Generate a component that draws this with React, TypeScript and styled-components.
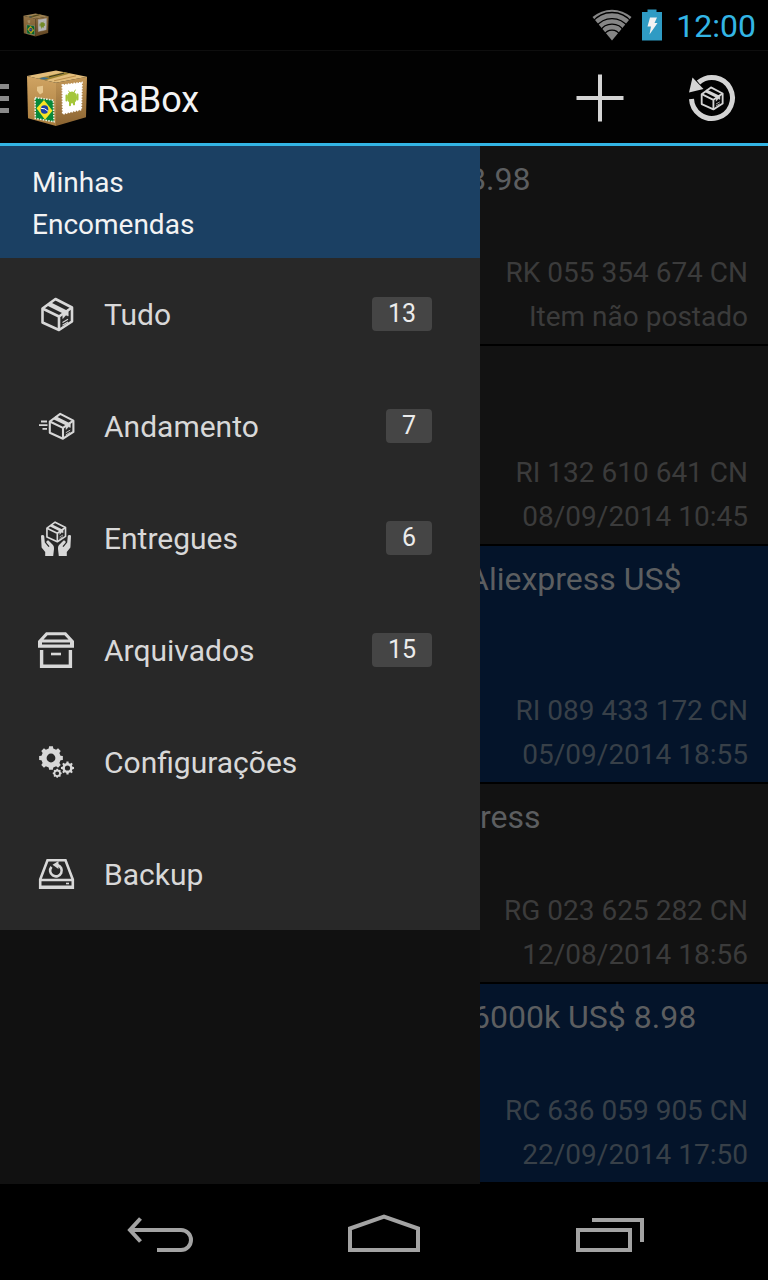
import React from "react";
import styled, { createGlobalStyle } from "styled-components";

const GlobalStyle = createGlobalStyle`
  * { box-sizing: border-box; }
  body { margin: 0; background: #000; font-family: Roboto, "Liberation Sans", sans-serif; }
  button { border: 0; padding: 0; background: none; color: inherit; font: inherit; cursor: pointer; }
  svg { display: block; flex: none; }
  h1, h2, p, ul { margin: 0; padding: 0; font-weight: 400; }
  ul { list-style: none; }
`;

const Screen = styled.div`
  display: flex;
  flex-direction: column;
  min-height: 100vh;
  background: #000;
`;

const StatusBar = styled.div`
  display: flex;
  align-items: center;
  height: 51px;
  padding: 0 12px 0 23px;
  border-bottom: 1px solid #0e0e0e;
`;

const Notification = styled.div`
  opacity: 0.7;
`;

const StatusIcons = styled.div`
  display: flex;
  align-items: center;
  gap: 10px;
  margin-left: auto;
`;

const Clock = styled.time`
  margin-left: 4px;
  padding-top: 2px;
  font-size: 32px;
  line-height: 40px;
  color: #33b5e5;
`;

const ActionBar = styled.header`
  display: flex;
  align-items: center;
  height: 95px;
  padding: 2px 32px 0 0;
  border-bottom: 3px solid #33b5e5;
  background: #020202;
`;

const HomeButton = styled.button`
  display: flex;
  align-items: center;
  gap: 16px;
`;

const AppTitle = styled.h1`
  margin-left: 9px;
  padding-top: 4px;
  font-size: 36px;
  line-height: 44px;
  color: #f3f3f3;
`;

const Actions = styled.div`
  display: flex;
  gap: 64px;
  margin-left: auto;
  color: #d4d4d4;
`;

const Body = styled.main`
  display: flex;
  flex: 1;
`;

const Drawer = styled.aside`
  flex: 0 0 62.5%;
  background: #111;
`;

const DrawerHeader = styled.h2`
  padding: 16px 32px 12px;
  background: #1b4063;
  font-size: 28px;
  line-height: 42px;
  color: #f3f3f3;
`;

const DrawerHeaderLine = styled.span`
  display: block;
`;

const MenuList = styled.ul`
  background: #282828;
`;

const MenuButton = styled.button`
  display: flex;
  align-items: center;
  width: 100%;
  height: 112px;
  padding: 0 48px 0 38px;
  gap: 30px;
  font-size: 30px;
  color: #d8d8d8;
`;

const Badge = styled.span`
  margin-left: auto;
  padding: 0 16px;
  border-radius: 4px;
  background: #454545;
  font-size: 25px;
  line-height: 34px;
  color: #ececec;
`;

const OrderList = styled.ul`
  flex: 1;
  min-width: 0;
  overflow: hidden;
`;

const Order = styled.li<{ $highlight?: boolean }>`
  display: flex;
  flex-direction: column;
  padding: 14px 20px 5px 0;
  border-bottom: 2px solid #000;
  background: ${(p) => (p.$highlight ? "#04142a" : "#121212")};
  color: ${(p) => (p.$highlight ? "#384048" : "#3b3b3b")};
`;

const OrderTitle = styled.h2<{ $lines: number; $shift: number }>`
  height: ${(p) => p.$lines * 38}px;
  margin-bottom: 53px;
  text-indent: ${(p) => -p.$shift}px;
  font-size: 32px;
  line-height: 38px;
  white-space: nowrap;
  color: #5c5e60;
`;

const OrderLine = styled.p`
  font-size: 28px;
  line-height: 44px;
  text-align: right;
  white-space: nowrap;
`;

const SystemNav = styled.nav`
  display: flex;
  height: 96px;
  padding: 0 48px;
  color: #a3a3a3;
`;

const SystemButton = styled.button`
  display: flex;
  flex: 1;
  align-items: center;
  justify-content: center;
`;

function BoxLogo({ width, height }: { width: number; height: number }) {
  return (
    <svg width={width} height={height} viewBox="0 0 62 59" preserveAspectRatio="none" aria-hidden="true">
      <defs>
        <linearGradient id="boxLeft" x1="0" y1="0" x2="0" y2="1">
          <stop offset="0" stopColor="#d0a463" />
          <stop offset="1" stopColor="#a87b3d" />
        </linearGradient>
        <linearGradient id="boxRight" x1="0" y1="0" x2="0" y2="1">
          <stop offset="0" stopColor="#c39757" />
          <stop offset="1" stopColor="#8a6331" />
        </linearGradient>
      </defs>
      <path d="M1 7 30 14V58L2 50Z" fill="url(#boxLeft)" />
      <path d="M30 14 61 8 60 49 30 58Z" fill="url(#boxRight)" />
      <path d="M1 7 30 1.500 61 8 30 14Z" fill="#e2bd7b" />
      <path d="M12 9.500 38 3.200 44 4.500 20 11.500Z" fill="#9a8130" />
      <path d="M13 9.500 18 8.300 23 9.300 18 11Z" fill="#3e6f8c" />
      <path d="M23 8 38 4.200" stroke="#3c3a20" strokeWidth="1" />
      <path d="M28 12 50 7" stroke="#b98c48" strokeWidth="1" />
      <path d="M11 18 17 17V24L14 26 11 22Z" fill="#e6c68d" />
      <path d="M36.300 16.300 56 13.700 55.300 41.300 36.700 45.700Z" fill="#fff" stroke="#fff" strokeWidth="1.600" strokeDasharray="1.600 1.200" />
      <ellipse cx="46" cy="29" rx="5" ry="6" fill="#a4c639" />
      <path d="M40.500 27V32M51.500 26V31M44 33V37M48 32V36" stroke="#a4c639" strokeWidth="2" strokeLinecap="round" />
      <path d="M42.500 22 44 25M49.500 21 48 24" stroke="#a4c639" strokeWidth="1" />
      <path d="M9 29 27.300 31.700 28 53.700 9.300 50.300Z" fill="#07883a" stroke="#e9efe0" strokeWidth="1.600" strokeDasharray="1.600 1.200" />
      <path d="M18 31.500 26.500 42.500 19 51.500 10.500 40Z" fill="#f8e425" />
      <ellipse cx="18.500" cy="41.300" rx="3.800" ry="4.300" fill="#1c3fa5" />
      <path d="M15 40Q19 39.500 22 43" stroke="#fff" strokeWidth="1" fill="none" />
    </svg>
  );
}

/* Isometric parcel on a 36 unit grid, shared by several icons. */
function Parcel({ transform }: { transform?: string }) {
  return (
    <g transform={transform} fill="none" stroke="currentColor" strokeWidth="2.600" strokeLinejoin="round">
      <path d="M4.500 12.500 17.500 3 34 11.500V25.500L21 34 4.500 26.500Z" />
      <path d="M4.500 12.500 21 20.500 34 11.500M21 20.500V34" />
      <path d="M10.500 7.800 28 16.500" strokeWidth="4.600" />
      <path d="M24.800 17 30.200 13.500V20L28 19 24.800 22.500Z" fill="currentColor" strokeWidth="0.600" />
      <path d="M24.500 26.500 30 23.300M24.500 29.200 30 26" strokeWidth="1.100" />
    </g>
  );
}

function Icon({ children }: { children: React.ReactNode }) {
  return (
    <svg width="36" height="36" viewBox="0 0 36 36" overflow="visible" aria-hidden="true">
      {children}
    </svg>
  );
}

const hand =
  "M3 16Q3 15 4.500 15T6.200 16L6.800 22.500 10.500 27 11.500 26.300 8.300 22.500Q8.200 20 10.500 20.600L15 25Q16.300 26.500 16 29L15.200 36H7.200V32L3.600 27.500Z";

function gearPath(cx: number, cy: number, outer: number, root: number, hole: number) {
  const teeth = 8;
  const step = (Math.PI * 2) / teeth;
  const points: string[] = [];
  for (let i = 0; i < teeth; i++) {
    const a = i * step;
    [
      [root, -0.3],
      [outer, -0.2],
      [outer, 0.2],
      [root, 0.3],
    ].forEach(([r, f]) => {
      const t = a + f * step;
      points.push(`${(cx + r * Math.cos(t)).toFixed(2)} ${(cy + r * Math.sin(t)).toFixed(2)}`);
    });
  }
  return `M${points.join("L")}ZM${cx - hole} ${cy}a${hole} ${hole} 0 1 0 ${hole * 2} 0a${hole} ${hole} 0 1 0 ${-hole * 2} 0Z`;
}

const menu = [
  { label: "Tudo", count: 13, icon: <Parcel /> },
  {
    label: "Andamento",
    count: 7,
    icon: (
      <>
        <Parcel transform="translate(8.200 3.500) scale(0.800)" />
        <path d="M3 13.500H9M1 17.200H9.500M4.500 20.900H9" stroke="currentColor" strokeWidth="1.800" />
      </>
    ),
  },
  {
    label: "Entregues",
    count: 6,
    icon: (
      <>
        <Parcel transform="translate(6.100 0.300) scale(0.630)" />
        <path d={hand} fill="currentColor" />
        <path d={hand} fill="currentColor" transform="translate(36 0) scale(-1 1)" />
      </>
    ),
  },
  {
    label: "Arquivados",
    count: 15,
    icon: (
      <>
        <path
          d="M0 15.700V9L8 0.300H28L36 9V15.700ZM5.500 7.500H30.500L26.500 3.300H9.500ZM4 10.500V12.500H32V10.500Z"
          fill="currentColor"
          fillRule="evenodd"
        />
        <path d="M3.600 18V34.300H32.400V18" fill="none" stroke="currentColor" strokeWidth="3.400" />
        <path d="M13 22H23" stroke="currentColor" strokeWidth="2.600" />
      </>
    ),
  },
  {
    label: "Configurações",
    icon: (
      <g fill="currentColor" fillRule="evenodd">
        <path d={gearPath(13, 14, 12, 9.8, 4.4)} />
        <path d={gearPath(29.5, 24, 6.6, 5.1, 2.6)} />
        <path d={gearPath(19.2, 29.3, 4.5, 3.8, 1.9)} />
      </g>
    ),
  },
  {
    label: "Backup",
    icon: (
      <g fill="none" stroke="currentColor" strokeWidth="2.600">
        <path d="M2.200 23.500 9.500 4.200H27.500L34.800 23.500V31.800H2.200Z" />
        <path d="M2.200 24H34.800" />
        <path d="M2.200 31.300H34.800" strokeWidth="3.400" />
        <path d="M13.500 10.800A5.800 5.800 0 1 0 19.500 9" strokeWidth="2.600" />
        <path d="M20.500 5V13L14.500 8.800Z" fill="currentColor" stroke="none" />
        <path d="M28 27.500H31" strokeWidth="1.600" />
      </g>
    ),
  },
];

const orders = [
  { title: "8.98", shift: 12, lines: 1, code: "RK 055 354 674 CN", status: "Item não postado" },
  { title: "", shift: 0, lines: 1, code: "RI 132 610 641 CN", status: "08/09/2014 10:45" },
  { title: "Aliexpress US$", shift: 12, lines: 2, code: "RI 089 433 172 CN", status: "05/09/2014 18:55", highlight: true },
  { title: "ress", shift: 0, lines: 1, code: "RG 023 625 282 CN", status: "12/08/2014 18:56" },
  { title: "6000k US$ 8.98", shift: 8, lines: 1, code: "RC 636 059 905 CN", status: "22/09/2014 17:50", highlight: true },
];

export default function App() {
  return (
    <Screen>
      <GlobalStyle />
      <StatusBar>
        <Notification>
          <BoxLogo width={26} height={24} />
        </Notification>
        <StatusIcons>
          <svg width="40" height="32" viewBox="0 0 40 32" aria-hidden="true">
            <path d="M20 31.500 0.500 8A30 30 0 0 1 39.500 8Z" fill="#868686" />
            <g fill="none" stroke="#000" strokeWidth="1.300">
              <path d="M0 13.500A25 25 0 0 1 40 13.500" />
              <path d="M4 18A19.500 19.500 0 0 1 36 18" />
              <path d="M8 22A14 14 0 0 1 32 22" />
              <path d="M12 26A9 9 0 0 1 28 26" />
            </g>
          </svg>
          <svg width="20" height="32" viewBox="0 0 20 32" aria-hidden="true">
            <path d="M5.500 0.500H14.500V3H20V31.500H0V3H5.500Z" fill="#2f9bc4" />
            <path d="M8 8.500H15L12.500 14H15.500L7.500 25.500 9 17.500H5.500Z" fill="#f2f2f2" />
          </svg>
          <Clock>12:00</Clock>
        </StatusIcons>
      </StatusBar>

      <ActionBar>
        <HomeButton aria-label="Menu">
          <svg width="10" height="30" viewBox="0 0 10 30" aria-hidden="true">
            <path d="M0 3.500H9M0 15.500H9M0 27.500H9" stroke="#8a8a8a" strokeWidth="5" />
          </svg>
          <BoxLogo width={62} height={58} />
        </HomeButton>
        <AppTitle>RaBox</AppTitle>
        <Actions>
          <button aria-label="Adicionar">
            <svg width="48" height="48" viewBox="0 0 48 48" aria-hidden="true">
              <path d="M0.500 24H47.500M24 0.500V47.500" stroke="currentColor" strokeWidth="4" />
            </svg>
          </button>
          <button aria-label="Atualizar">
            <svg width="48" height="48" viewBox="0 0 48 48" aria-hidden="true">
              <path d="M3.500 25A20.500 20.500 0 1 0 10.500 8.500" fill="none" stroke="currentColor" strokeWidth="5" />
              <path d="M4.500 3.500 15.500 15 1 18.500Z" fill="currentColor" />
              <Parcel transform="translate(10.500 11.300) scale(0.710)" />
            </svg>
          </button>
        </Actions>
      </ActionBar>

      <Body>
        <Drawer>
          <DrawerHeader>
            <DrawerHeaderLine>Minhas</DrawerHeaderLine>
            <DrawerHeaderLine>Encomendas</DrawerHeaderLine>
          </DrawerHeader>
          <MenuList>
            {menu.map((item) => (
              <li key={item.label}>
                <MenuButton>
                  <Icon>{item.icon}</Icon>
                  {item.label}
                  {item.count !== undefined && <Badge>{item.count}</Badge>}
                </MenuButton>
              </li>
            ))}
          </MenuList>
        </Drawer>
        <OrderList>
          {orders.map((order) => (
            <Order key={order.code} $highlight={order.highlight}>
              <OrderTitle $lines={order.lines} $shift={order.shift}>
                {order.title}
              </OrderTitle>
              <OrderLine>{order.code}</OrderLine>
              <OrderLine>{order.status}</OrderLine>
            </Order>
          ))}
        </OrderList>
      </Body>

      <SystemNav>
        <SystemButton aria-label="Voltar">
          <svg width="72" height="48" viewBox="0 0 72 48" fill="none" stroke="currentColor" strokeWidth="4" aria-hidden="true">
            <path d="M5 22H57A10 10 0 0 1 57 42H33" />
            <path d="M16.500 10.500 6 22 16.500 33.500" />
          </svg>
        </SystemButton>
        <SystemButton aria-label="Início">
          <svg width="72" height="48" viewBox="0 0 72 48" fill="none" stroke="currentColor" strokeWidth="4" aria-hidden="true">
            <path d="M2 42V20.500L36 8.500 70 20.500V42Z" />
          </svg>
        </SystemButton>
        <SystemButton aria-label="Recentes">
          <svg width="72" height="48" viewBox="0 0 72 48" fill="none" stroke="currentColor" strokeWidth="4" aria-hidden="true">
            <path d="M6 22H58V42H6Z" />
            <path d="M20 12H70V34" />
          </svg>
        </SystemButton>
      </SystemNav>
    </Screen>
  );
}
